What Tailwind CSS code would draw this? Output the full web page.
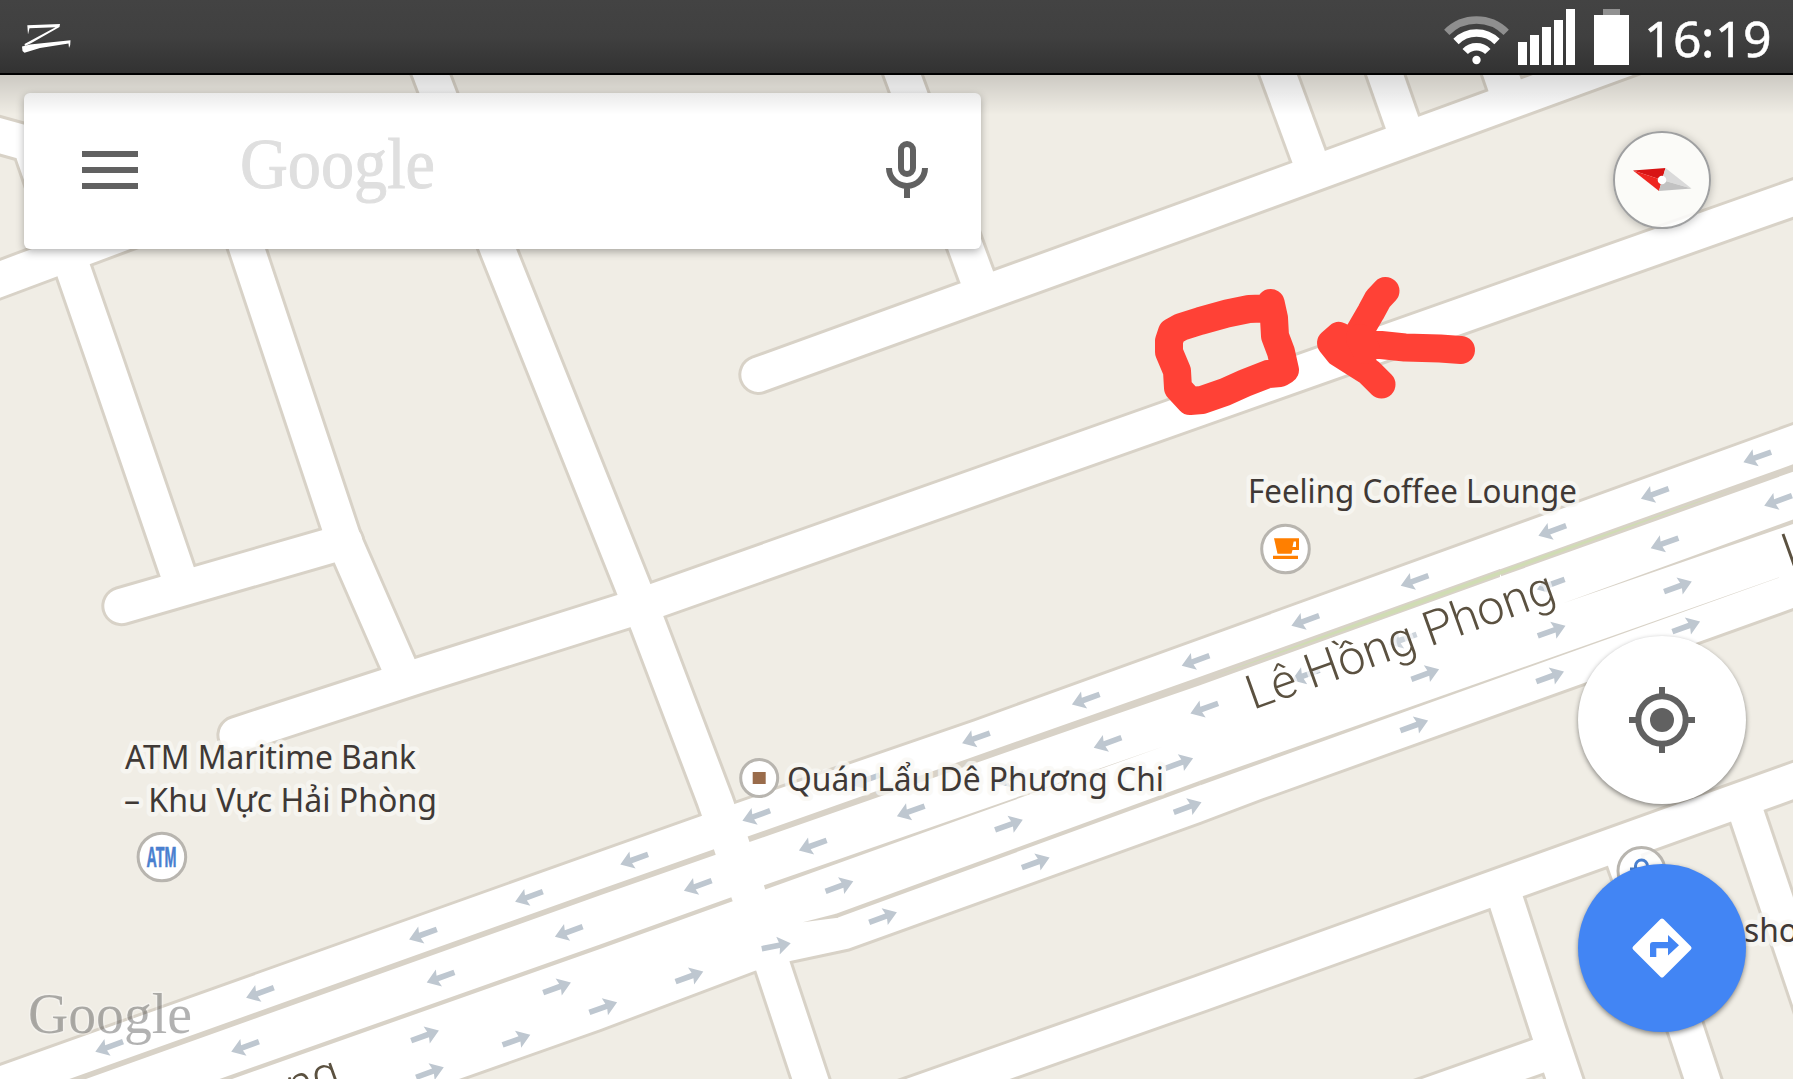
<!DOCTYPE html>
<html lang="vi">
<head>
<meta charset="utf-8">
<title>Maps</title>
<script src="https://cdn.jsdelivr.net/npm/@tailwindcss/browser@4"></script>
</head>
<body class="relative h-[1079px] w-[1793px] overflow-hidden bg-[#f0ede5] font-['Noto_Sans',sans-serif]">

<!-- Map canvas -->
<svg class="absolute inset-0" width="1793" height="1079" viewBox="0 0 1793 1079">
  <defs>
    <g id="roads" fill="none" stroke-linejoin="round">
      <path stroke-linecap="round" d="M758.5 374.7L1200 215L1640 54L1800 -5"/>
      <path stroke-linecap="round" d="M236.6 735L418 676L640 606L1200 408L1800 196"/>
      <path stroke-linecap="round" d="M121.5 606L345 541.5"/>
      <path d="M431 75L424 57M431 75L497.5 249L648.2 625L714.7 800L772.5 965L815 1093"/>
      <path d="M214 150L343.7 540L404 678"/>
      <path d="M-10 133L29.8 144L104.7 360L180 580"/>
      <path d="M-10 283L215 199"/>
      <path d="M896 57L976 275L982 290"/>
      <path d="M1272 57L1315 174"/>
      <path d="M1379 57L1406 134"/>
      <path d="M1495 57L1507 92"/>
      <path d="M850 1117L1200 993.7L1810 775"/>
      <path d="M1502 888L1548.5 1031.7L1568 1090"/>
      <path d="M1400 1105L1550 1052"/>
      <path d="M1620 848L1627 868L1685.5 1028L1706 1090"/>
      <path d="M1744 806L1838 1085"/>
    </g>
    <path id="lanes" d="M-10 1069.5L600 852L700 816.5L736 803.5L974 721.5L1200 639.7L1803 421.5V604.5L1262 798.5L1200 822L848.7 948.5L791.3 960.8L755 970.8L600 1029.2L440 1085.7H-10Z"/>
    <path id="w" d="M-15 0L-2 -9L-3.5 -2.8H14.5V2.8H-3.5L-2 9Z"/>
    <path id="e" d="M15 0L2 -9L3.5 -2.8H-14.5V2.8H3.5L2 9Z"/>
  </defs>

  <g stroke="#d8d2c7" stroke-width="40.400"><use href="#roads"/></g>
  <use href="#lanes" fill="#d8d2c7" stroke="#d8d2c7" stroke-width="6"/>
  <g stroke="#fff" stroke-width="34.4"><use href="#roads"/></g>
  <use href="#lanes" fill="#fff"/>

  <!-- Medians -->
  <g fill="none" stroke="#d8d2c7">
    <path stroke-width="5.6" d="M60 1085.3L600 892.3L714.8 852"/>
    <path stroke-width="7" d="M1500 573L1800 465.5"/>
    <path stroke-width="4.2" d="M208 1085.3L600 946.7L732 899.3"/>
    <path stroke-width="4" d="M836 916L1200 783"/>
  </g>
  <g fill="#d8d2c7">
    <path d="M747.600 836.500L1089 716L1200 676.800L1500 569V577L1200 685.200L1090.500 723L749.500 842Z"/>
    <path d="M763.9 885.2L765.2 889.5L1162.5 746.7Z"/>
    <path d="M1563 603.3L1793 519.500L1793 524Z"/>
    <path d="M802.8 922.3L836 913.8L838 917.8Z"/>
    <path d="M1199 781L1200.5 785.2L1786 575Z"/>
  </g>
  <path fill="#d0dcb4" d="M1210 677.5L1400 607L1550 553L1740 487L1550 556.5L1400 611.5Z"/>

  <!-- One-way arrows -->
  <g fill="#bec7d0">
    <use href="#w" transform="translate(1757.5 457) rotate(-20)"/>
    <use href="#w" transform="translate(1655 493.7) rotate(-20)"/>
    <use href="#w" transform="translate(1552.5 530.7) rotate(-20)"/>
    <use href="#w" transform="translate(1414.8 580.7) rotate(-20)"/>
    <use href="#w" transform="translate(1305.5 620.7) rotate(-20)"/>
    <use href="#w" transform="translate(1195.8 660.7) rotate(-20)"/>
    <use href="#w" transform="translate(1086 699.3) rotate(-20)"/>
    <use href="#w" transform="translate(976.2 738) rotate(-20)"/>
    <use href="#w" transform="translate(1778.3 500.7) rotate(-20)"/>
    <use href="#w" transform="translate(1664.8 543) rotate(-20)"/>
    <use href="#w" transform="translate(1551 584.3) rotate(-20)"/>
    <use href="#w" transform="translate(1403 639.3) rotate(-20)" opacity=".75"/>
    <use href="#w" transform="translate(1306 675) rotate(-20)"/>
    <use href="#w" transform="translate(1204.5 708.3) rotate(-20)"/>
    <use href="#w" transform="translate(1107.8 742.7) rotate(-20)"/>
    <use href="#w" transform="translate(866 780) rotate(-20)"/>
    <use href="#w" transform="translate(1010 778) rotate(-20)"/>
    <use href="#w" transform="translate(756.5 815.7) rotate(-20)"/>
    <use href="#w" transform="translate(911 811) rotate(-20)"/>
    <use href="#w" transform="translate(813 845.3) rotate(-20)"/>
    <use href="#w" transform="translate(634.4 859.3) rotate(-20)"/>
    <use href="#w" transform="translate(698 885.7) rotate(-20)"/>
    <use href="#w" transform="translate(529.2 896.7) rotate(-20)"/>
    <use href="#w" transform="translate(423.2 934.3) rotate(-20)"/>
    <use href="#w" transform="translate(260.2 992.7) rotate(-20)"/>
    <use href="#w" transform="translate(109.4 1046.7) rotate(-20)"/>
    <use href="#w" transform="translate(569 931.7) rotate(-20)"/>
    <use href="#w" transform="translate(440.8 977.3) rotate(-20)"/>
    <use href="#w" transform="translate(245.3 1046.7) rotate(-20)"/>
    <use href="#e" transform="translate(1677.7 586.7) rotate(-20)"/>
    <use href="#e" transform="translate(1551.4 631) rotate(-20)"/>
    <use href="#e" transform="translate(1425 674.3) rotate(-20)"/>
    <use href="#e" transform="translate(1686 626.7) rotate(-20)"/>
    <use href="#e" transform="translate(1549.9 676.7) rotate(-20)"/>
    <use href="#e" transform="translate(1414 725.7) rotate(-20)"/>
    <use href="#e" transform="translate(1179 763.3) rotate(-20)"/>
    <use href="#e" transform="translate(1008.7 825) rotate(-20)"/>
    <use href="#e" transform="translate(1187.4 807.3) rotate(-20)"/>
    <use href="#e" transform="translate(1035.5 862.7) rotate(-20)"/>
    <use href="#e" transform="translate(839.2 886.3) rotate(-20)"/>
    <use href="#e" transform="translate(882.8 917.3) rotate(-20)"/>
    <use href="#e" transform="translate(776 946) rotate(-11)"/>
    <use href="#e" transform="translate(689.2 976.7) rotate(-20)"/>
    <use href="#e" transform="translate(603 1007.5) rotate(-20)"/>
    <use href="#e" transform="translate(556.8 987.7) rotate(-20)"/>
    <use href="#e" transform="translate(424.8 1035.7) rotate(-20)"/>
    <use href="#e" transform="translate(516.2 1040) rotate(-20)"/>
    <use href="#e" transform="translate(429.7 1072.3) rotate(-20)"/>
  </g>

  <!-- Street names -->
  <g class="font-['Roboto',sans-serif] font-light" font-size="48" fill="#5b5140" stroke="#fff" stroke-opacity=".65" stroke-width="6" paint-order="stroke" stroke-linejoin="round">
    <text transform="translate(1253 710) rotate(-19.7)" textLength="324" lengthAdjust="spacingAndGlyphs">Lê Hồng Phong</text>
    <text transform="translate(1789 568) rotate(-19.6)">L</text>
    <text transform="translate(293 1103) rotate(-19.6)">ng</text>
  </g>

  <!-- Places -->
  <g font-size="32" fill="#3f3936" stroke="#f9f8f4" stroke-opacity=".75" stroke-width="9" paint-order="stroke" stroke-linejoin="round">
    <text x="1248" y="503" textLength="329" lengthAdjust="spacingAndGlyphs">Feeling Coffee Lounge</text>
    <text x="787" y="790.500" textLength="377" lengthAdjust="spacingAndGlyphs">Quán Lẩu Dê Phương Chi</text>
    <text x="125" y="769" textLength="291" lengthAdjust="spacingAndGlyphs">ATM Maritime Bank</text>
    <text x="124" y="811.500" textLength="313" lengthAdjust="spacingAndGlyphs">– Khu Vực Hải Phòng</text>
    <text x="1744" y="942" textLength="54" lengthAdjust="spacingAndGlyphs">sho</text>
  </g>
  <g fill="#3f3936" stroke="#3f3936" stroke-width=".5" font-size="32" aria-hidden="true"></g>
  <g fill="#fff" stroke="#b8b5af" stroke-width="3">
    <circle cx="1285.5" cy="549" r="23.8"/>
    <circle cx="161.9" cy="857" r="23.8"/>
    <circle cx="759.2" cy="778" r="18.5"/>
    <circle cx="1641.5" cy="871" r="23.5" fill-opacity=".85"/>
  </g>
  <path fill="#ff7f00" fill-rule="evenodd" d="M1274 538.3H1299V550H1292.500L1291.500 553.700H1277.500ZM1293.700 541.500L1292.500 547H1296V541.500ZM1273 555.700H1298V559H1273Z"/>
  <text x="146.500" y="867.300" font-size="29" textLength="30" lengthAdjust="spacingAndGlyphs" fill="#4a80cf" stroke="#4a80cf" stroke-width=".6" class="font-['Liberation_Sans',sans-serif] font-bold">ATM</text>
  <path fill="#9a6c4b" d="M752.700 772H765.700V784H752.700Z"/>
  <path fill="none" stroke="#4a80cf" stroke-width="3" d="M1635.500 870V866A6 6 0 0 1 1647.500 866V870M1630 869H1653"/>

  <!-- Watermark -->
  <text x="28" y="1033" font-size="58" textLength="164" lengthAdjust="spacingAndGlyphs" fill="#000" fill-opacity=".3" stroke="#fff" stroke-opacity=".3" stroke-width="3" paint-order="stroke" class="font-['Liberation_Serif',serif]">Google</text>

  <!-- Hand-drawn marks -->
  <g fill="none" stroke="#ff4136" stroke-width="28" stroke-linecap="round" stroke-linejoin="round">
    <path d="M1270.700 303L1274 318L1275 336L1281 352L1285 370L1280 373L1268 374L1245 383L1225 392L1202 400L1190 401L1178 388L1177 371L1169 352V341L1172 332L1181 327L1200 321L1227 313.500L1249 309L1262 308.500"/>
    <path d="M1385.500 291L1378 299L1371 312L1353 343L1339 336L1331 343L1339 353L1369 372L1381.500 384.500M1333 343L1355 344L1381 345L1405 347.500L1440 348.500L1461 350"/>
    <path d="M1366 350L1360 338"/>
  </g>
</svg>

<!-- Status bar -->
<header class="relative z-20 flex h-[75px] items-stretch justify-between border-b-2 border-black bg-linear-to-b from-[#434343] via-[#404040] to-[#323232]">
  <svg width="90" height="73" viewBox="0 0 90 73" fill="#fff">
    <path d="M27.300 25.300L60 23.900L59.500 27L31 43.300L25 46L24.500 44L55.500 27.200L29.500 28.300L28 34.500Z"/>
    <path d="M22 46.500L30 44.500L70.500 40.200L70.200 45L69 48L68.500 43.600L40 48L24.500 52.800L22.500 51Z"/>
  </svg>
  <svg width="363" height="73" viewBox="1430 0 363 73" fill="#fff">
    <g fill="none" stroke="#fff" stroke-width="7.500">
      <path stroke="#8f8f8f" d="M1446.800 32.300A42 42 0 0 1 1506.200 32.300"/>
      <path d="M1456 41.500A29 29 0 0 1 1497 41.500"/>
      <path d="M1465.200 51.500A15.800 15.800 0 0 1 1487.800 51.500"/>
    </g>
    <circle cx="1476.500" cy="60" r="4.200"/>
    <path d="M1518 42h9v23h-9zM1530 35h9v30h-9zM1542 27h9v38h-9zM1554 20h9v45h-9zM1566 9h9v56h-9zM1594 15h35v50h-35z"/>
    <path fill="#919191" d="M1603 9h17v6h-17z"/>
    <text x="1644 1673 1701 1715 1743" y="57" font-size="50" stroke="#fff" stroke-width=".5">16:19</text>
  </svg>
</header>
<div class="pointer-events-none absolute inset-x-0 top-[75px] z-20 h-10 bg-linear-to-b from-black/15 to-transparent"></div>

<main class="relative pt-[18px] pl-6">
  <!-- Search card -->
  <div class="flex h-[156px] w-[957px] items-center rounded-[6px] bg-white pl-[58px] shadow-[0_3px_8px_rgba(0,0,0,0.3)]">
    <button class="mb-[2px] flex w-14 flex-col gap-[10px]" aria-label="Menu">
      <span class="h-[6px] w-14 bg-[#616161]"></span>
      <span class="h-[6px] w-14 bg-[#616161]"></span>
      <span class="h-[6px] w-14 bg-[#616161]"></span>
    </button>
    <svg class="ml-[92px]" width="220" height="156" viewBox="230 93 220 156">
      <text x="240" y="187.500" font-size="72" textLength="195" lengthAdjust="spacingAndGlyphs" fill="#dfdfdf" stroke="#dfdfdf" stroke-width="1" class="font-['Liberation_Serif',serif]">Google</text>
    </svg>
    <svg class="mr-[52px] ml-auto" width="44" height="156" viewBox="885 93 44 156" fill="none" stroke="#616161" stroke-width="6">
      <rect x="901" y="144" width="12" height="30" rx="6"/>
      <path d="M889 168A18 18 0 0 0 925 168M907 186V198"/>
    </svg>
  </div>
</main>

<!-- Floating controls -->
<button class="absolute top-[131px] left-[1613px] size-[98px] rounded-full border-2 border-[#9fa0a1] bg-[#fdfdfb]/85 shadow-[0_1px_8px_rgba(0,0,0,0.25)]" aria-label="Compass">
  <svg width="94" height="94" viewBox="-47 -47 94 94">
    <path fill="#d81414" d="M-29 -9.500L3.500 -12L0 0Z"/>
    <path fill="#ef2620" d="M-29 -9.500L0 0L-3 11Z"/>
    <path fill="#dadada" d="M3.500 -12L29.500 8.500L0 0Z"/>
    <path fill="#c2c2c2" d="M29.500 8.500L-3 11L0 0Z"/>
    <circle r="4.300" fill="#fff"/>
  </svg>
</button>
<button class="absolute top-[636px] left-[1578px] size-[168px] rounded-full bg-white shadow-[0_2px_5px_rgba(0,0,0,0.45)]" aria-label="My location">
  <svg width="168" height="168" viewBox="-84 -84 168 168" fill="none" stroke="#616161" stroke-width="6">
    <circle r="23.700"/>
    <circle r="12" fill="#616161" stroke="none"/>
    <path d="M0 -33V-24M0 33V24M-33 0H-24M33 0H24"/>
  </svg>
</button>
<button class="absolute top-[864px] left-[1578px] size-[168px] rounded-full bg-[#4285f4] shadow-[0_2px_5px_rgba(0,0,0,0.45)]" aria-label="Directions">
  <svg width="168" height="168" viewBox="-84 -84 168 168">
    <path fill="#fff" stroke="#fff" stroke-width="4" stroke-linejoin="round" d="M0 -27.500L27.500 0L0 27.500L-27.500 0Z"/>
    <path fill="#4285f4" d="M-12 9V-3Q-12 -6 -9 -6H6V-13L17 -2.800L6 7.500V0.300H-5.700V9Z"/>
  </svg>
</button>
</body>
</html>
